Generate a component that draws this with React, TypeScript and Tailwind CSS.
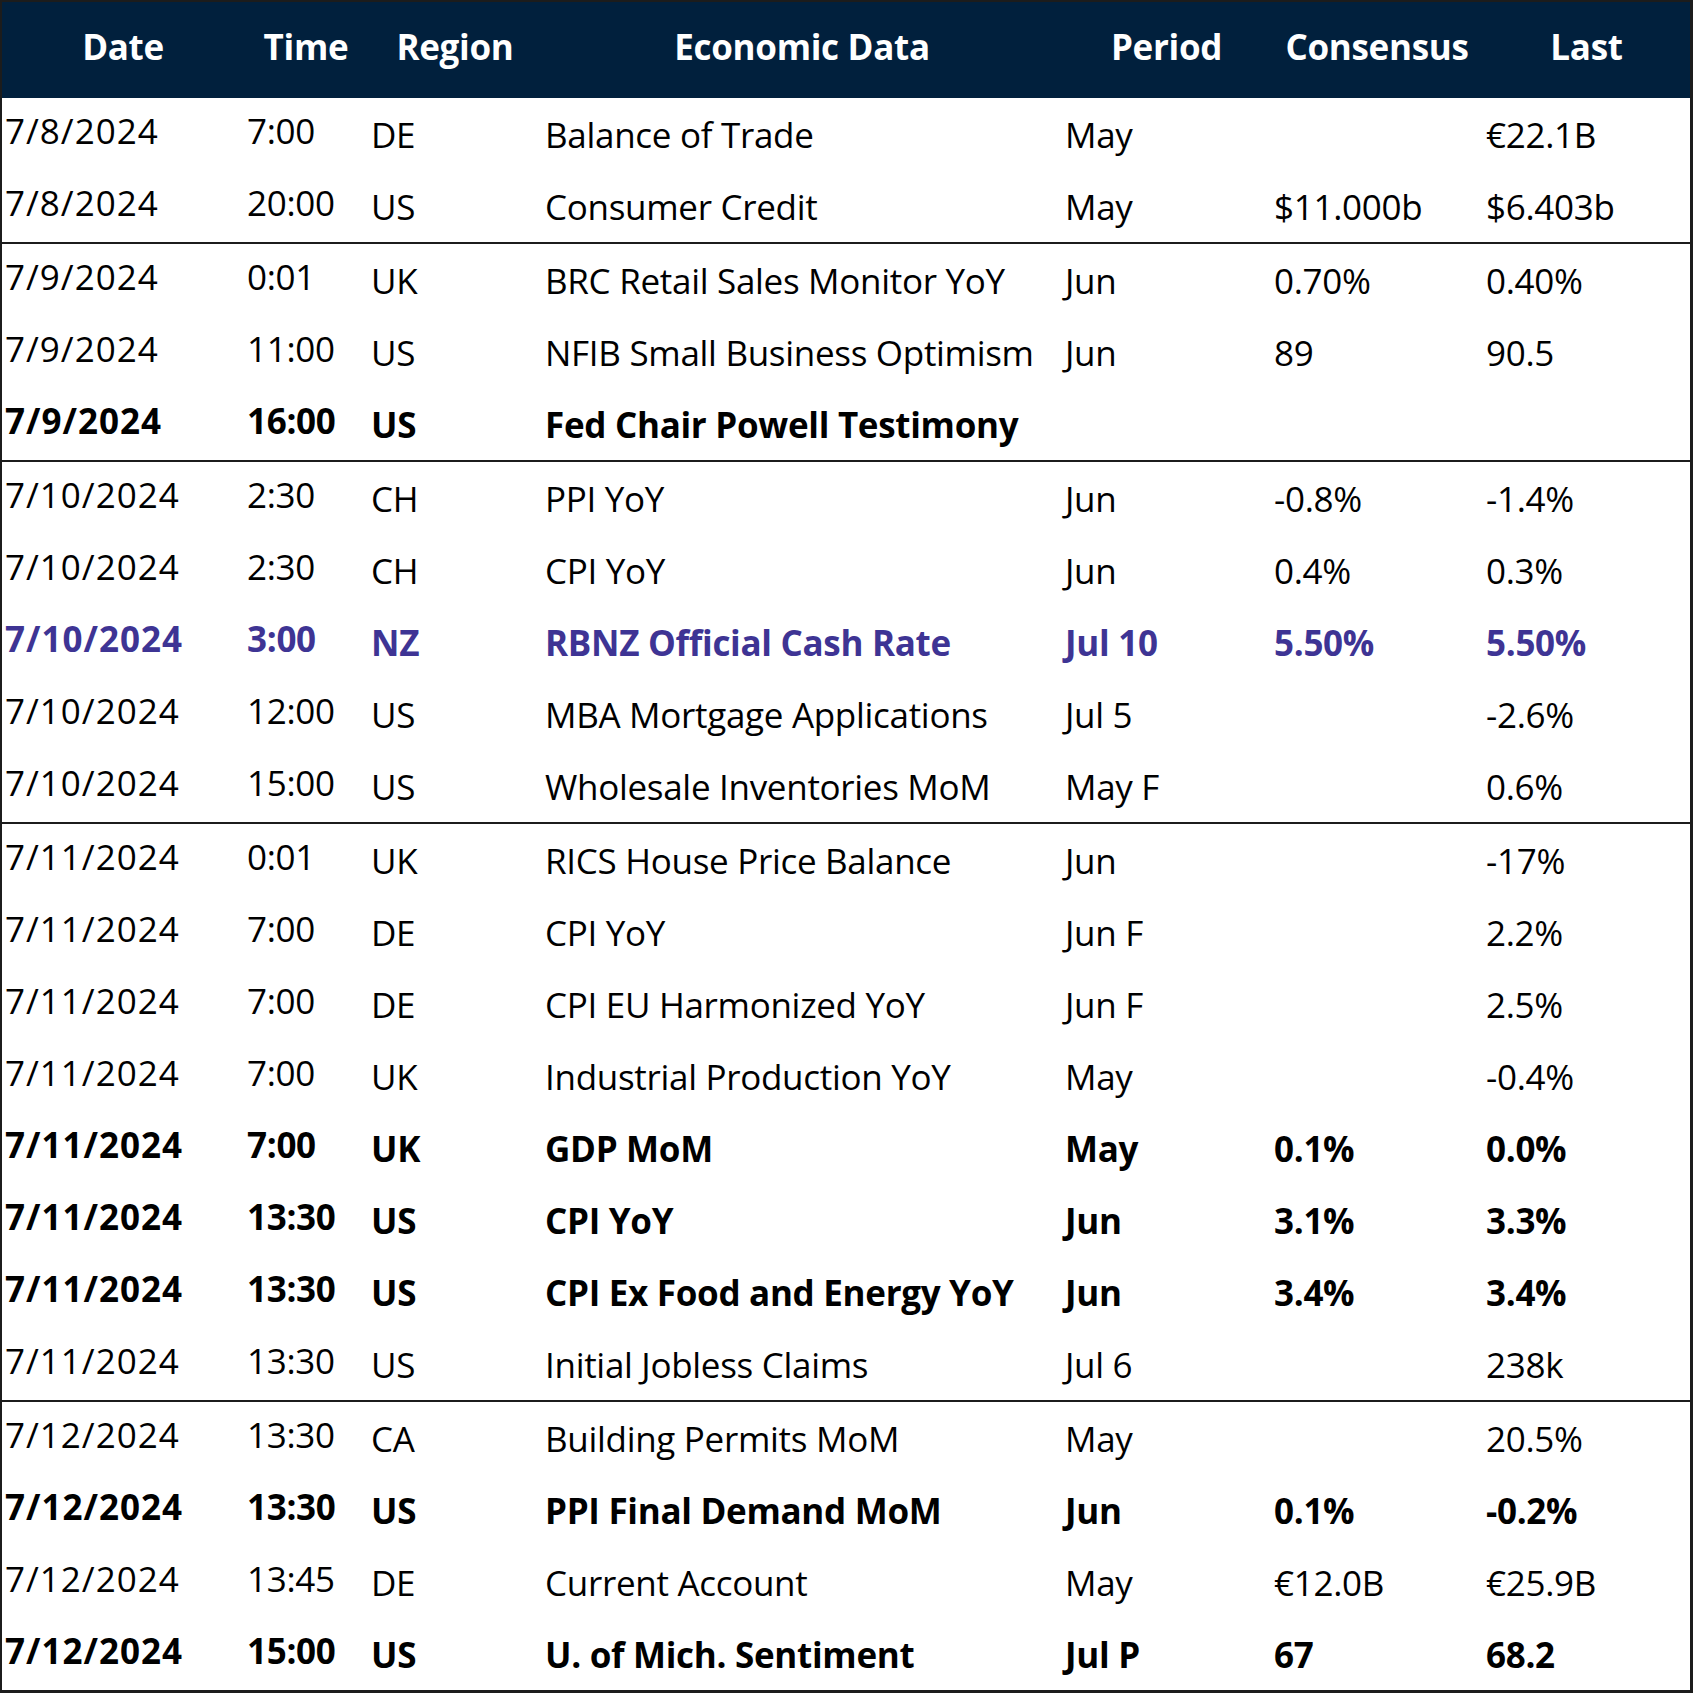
type Row = {
  date: string;
  time: string;
  region: string;
  data: string;
  period?: string;
  cons?: string;
  last?: string;
  style?: "bold" | "hl";
};

const groups: Row[][] = [
  [
    { date: "7/8/2024", time: "7:00", region: "DE", data: "Balance of Trade", period: "May", last: "€22.1B" },
    { date: "7/8/2024", time: "20:00", region: "US", data: "Consumer Credit", period: "May", cons: "$11.000b", last: "$6.403b" },
  ],
  [
    { date: "7/9/2024", time: "0:01", region: "UK", data: "BRC Retail Sales Monitor YoY", period: "Jun", cons: "0.70%", last: "0.40%" },
    { date: "7/9/2024", time: "11:00", region: "US", data: "NFIB Small Business Optimism", period: "Jun", cons: "89", last: "90.5" },
    { date: "7/9/2024", time: "16:00", region: "US", data: "Fed Chair Powell Testimony", style: "bold" },
  ],
  [
    { date: "7/10/2024", time: "2:30", region: "CH", data: "PPI YoY", period: "Jun", cons: "-0.8%", last: "-1.4%" },
    { date: "7/10/2024", time: "2:30", region: "CH", data: "CPI YoY", period: "Jun", cons: "0.4%", last: "0.3%" },
    { date: "7/10/2024", time: "3:00", region: "NZ", data: "RBNZ Official Cash Rate", period: "Jul 10", cons: "5.50%", last: "5.50%", style: "hl" },
    { date: "7/10/2024", time: "12:00", region: "US", data: "MBA Mortgage Applications", period: "Jul 5", last: "-2.6%" },
    { date: "7/10/2024", time: "15:00", region: "US", data: "Wholesale Inventories MoM", period: "May F", last: "0.6%" },
  ],
  [
    { date: "7/11/2024", time: "0:01", region: "UK", data: "RICS House Price Balance", period: "Jun", last: "-17%" },
    { date: "7/11/2024", time: "7:00", region: "DE", data: "CPI YoY", period: "Jun F", last: "2.2%" },
    { date: "7/11/2024", time: "7:00", region: "DE", data: "CPI EU Harmonized YoY", period: "Jun F", last: "2.5%" },
    { date: "7/11/2024", time: "7:00", region: "UK", data: "Industrial Production YoY", period: "May", last: "-0.4%" },
    { date: "7/11/2024", time: "7:00", region: "UK", data: "GDP MoM", period: "May", cons: "0.1%", last: "0.0%", style: "bold" },
    { date: "7/11/2024", time: "13:30", region: "US", data: "CPI YoY", period: "Jun", cons: "3.1%", last: "3.3%", style: "bold" },
    { date: "7/11/2024", time: "13:30", region: "US", data: "CPI Ex Food and Energy YoY", period: "Jun", cons: "3.4%", last: "3.4%", style: "bold" },
    { date: "7/11/2024", time: "13:30", region: "US", data: "Initial Jobless Claims", period: "Jul 6", last: "238k" },
  ],
  [
    { date: "7/12/2024", time: "13:30", region: "CA", data: "Building Permits MoM", period: "May", last: "20.5%" },
    { date: "7/12/2024", time: "13:30", region: "US", data: "PPI Final Demand MoM", period: "Jun", cons: "0.1%", last: "-0.2%", style: "bold" },
    { date: "7/12/2024", time: "13:45", region: "DE", data: "Current Account", period: "May", cons: "€12.0B", last: "€25.9B" },
    { date: "7/12/2024", time: "15:00", region: "US", data: "U. of Mich. Sentiment", period: "Jul P", cons: "67", last: "68.2", style: "bold" },
  ],
];

const cols = "grid grid-cols-[242px_124px_174px_520px_209px_212px_1fr]";
const headers = ["Date", "Time", "Region", "Economic Data", "Period", "Consensus", "Last"];

function DataRow({ r }: { r: Row }) {
  const tone =
    r.style === "hl" ? "font-bold text-[#3e3494]" : r.style === "bold" ? "font-bold text-black" : "text-black";
  return (
    <div className={`${cols} h-[72px] items-center whitespace-nowrap ${tone}`}>
      <div className="pl-[3px] pb-[8px] tracking-[1px]">{r.date}</div>
      <div className="pl-[3px] pb-[8px]">{r.time}</div>
      <div className="pl-[3px]">{r.region}</div>
      <div className="pl-[3px]">{r.data}</div>
      <div className="pl-[3px]">{r.period}</div>
      <div className="pl-[3px]">{r.cons}</div>
      <div className="pl-[3px]">{r.last}</div>
    </div>
  );
}

export default function App() {
  return (
    <div className="bg-white w-[1694px] h-[1697px] font-['Open_Sans',sans-serif] text-[35px] leading-none tracking-[-0.3px]">
      <div className="w-[1693px] border-t-2 border-l-2 border-r-[3px] border-b-[3px] border-[#1c1c1c]">
        <div className={`${cols} h-[96px] items-center bg-[#01203d] text-white font-bold pb-[8px]`}>
          {headers.map((h) => (
            <div key={h} className="text-center">{h}</div>
          ))}
        </div>
        {groups.map((g, i) => (
          <div key={i} className={i > 0 ? "border-t-2 border-[#1c1c1c]" : ""}>
            {g.map((r, j) => (
              <DataRow key={j} r={r} />
            ))}
          </div>
        ))}
      </div>
    </div>
  );
}
